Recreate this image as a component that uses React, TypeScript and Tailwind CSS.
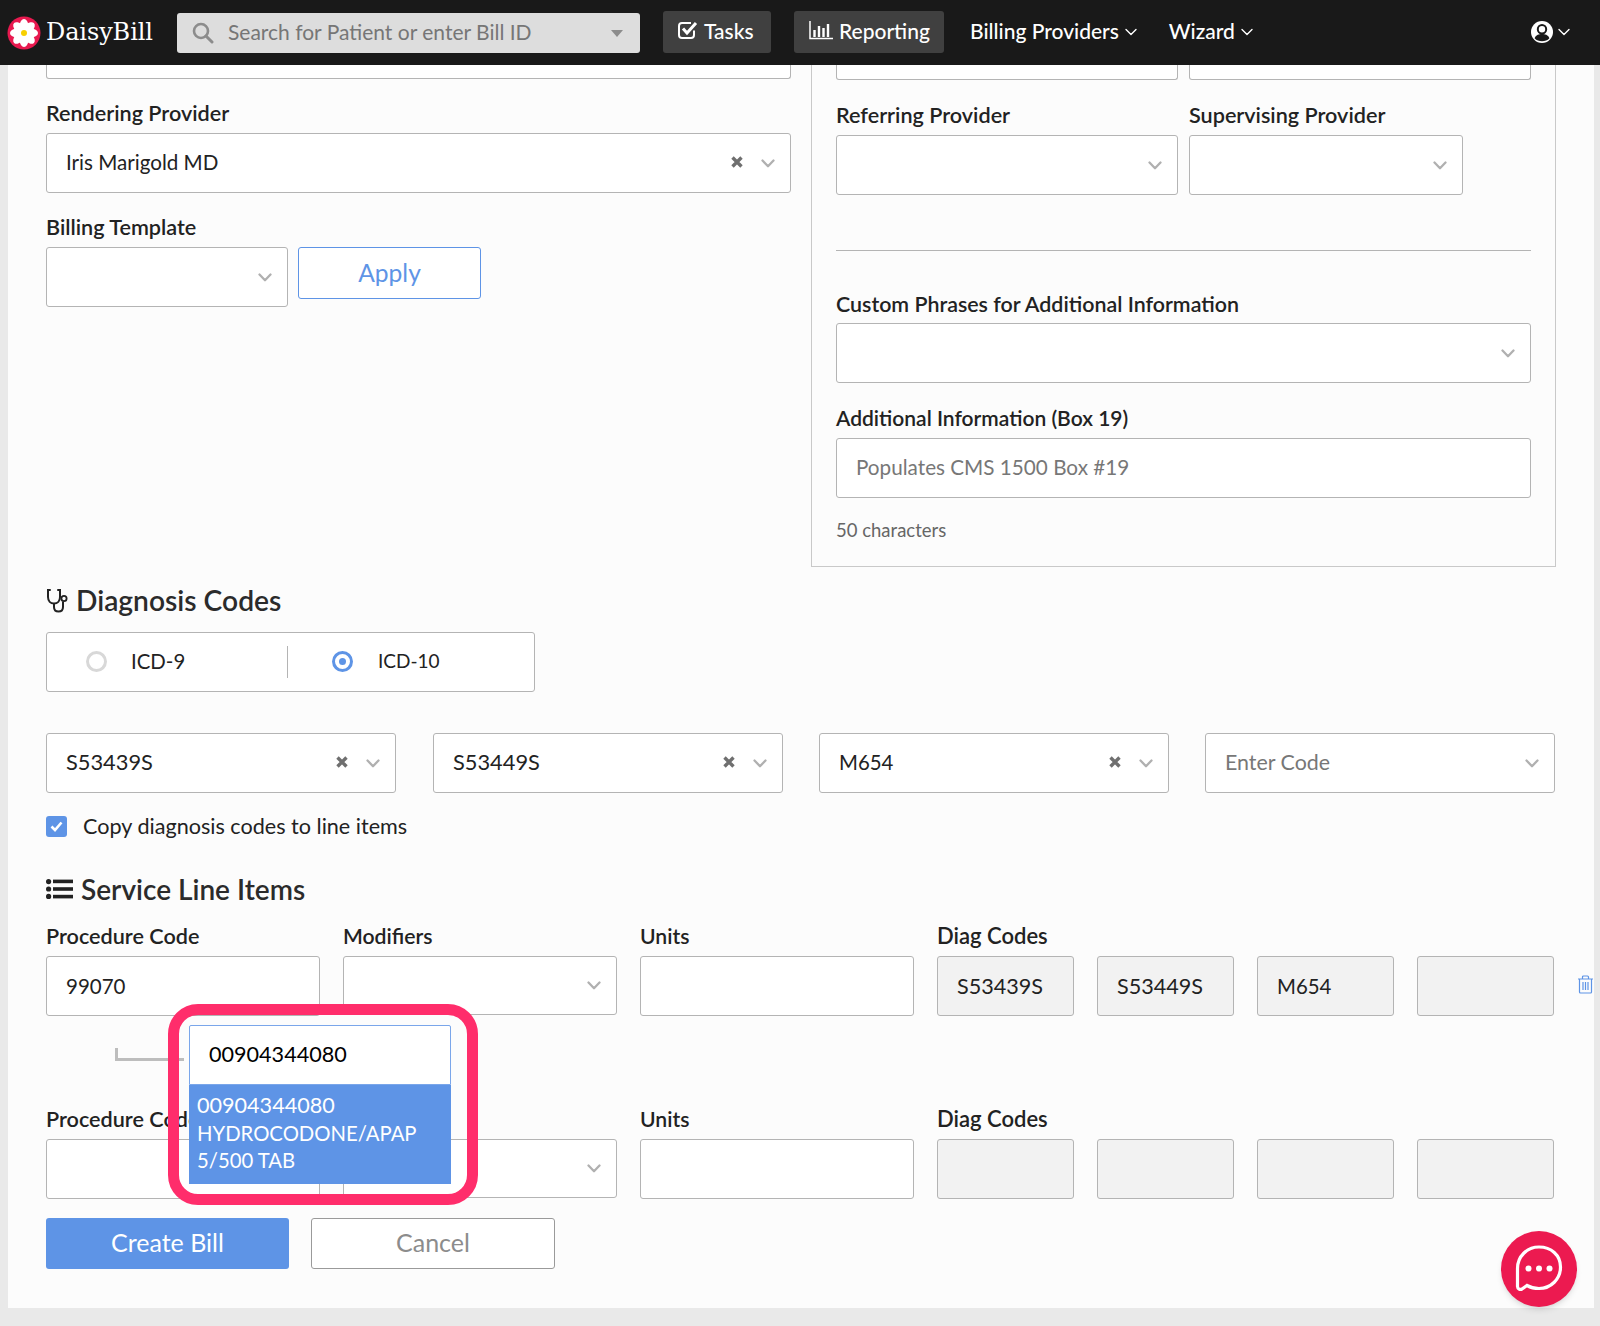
import React from "react";

const font = { fontFamily: '"Lato","Open Sans",sans-serif' };

function Chevron({ className = "" }: { className?: string }) {
  return (
    <svg width="14" height="9" viewBox="0 0 14 9" fill="none" className={className}>
      <path d="M1.5 1.5 7 7.2l5.500-5.700" stroke="#b0b0b0" strokeWidth="2.300" strokeLinecap="round" strokeLinejoin="round" />
    </svg>
  );
}

function NavChevron() {
  return (
    <svg width="12" height="8" viewBox="0 0 12 8" fill="none">
      <path d="M1 1.500 6 6.500l5-5" stroke="#fff" strokeWidth="1.400" strokeLinecap="round" strokeLinejoin="round" />
    </svg>
  );
}

function ClearX() {
  return (
    <svg width="12" height="12" viewBox="0 0 12 12" className="mr-[18px] -mt-[2px]">
      <path d="M1.500 1.500l9 9M10.500 1.500l-9 9" stroke="#6f6f6f" strokeWidth="3.400" />
    </svg>
  );
}

function Label({ children, className = "", size = "text-[21.6px]" }: { children: React.ReactNode; className?: string; size?: string }) {
  return <div className={`h-[24px] leading-[22px] font-semibold text-[#222] whitespace-nowrap ${size} ${className}`}>{children}</div>;
}

function Select({ value, placeholder, clear, className = "", text = "text-[20.6px]" }: { value?: string; placeholder?: string; clear?: boolean; className?: string; text?: string }) {
  return (
    <div className={`h-[60px] bg-white border border-[#b4b4b4] rounded-[3px] flex items-center pl-[19px] pr-[15px] ${className}`}>
      <span className={`flex-1 pb-[1px] ${text} ${placeholder ? "text-[#777]" : "text-[#222]"}`}>{value ?? placeholder}</span>
      {clear && <ClearX />}
      <Chevron />
    </div>
  );
}

function Field({ value, className = "" }: { value?: string; className?: string }) {
  return (
    <div className={`h-[60px] bg-white border border-[#b4b4b4] rounded-[3px] flex items-center pl-[19px] text-[20.5px] text-[#222] ${className}`}>{value}</div>
  );
}

function Diag({ value }: { value?: string }) {
  return (
    <div className={`w-[137px] h-[60px] bg-[#f2f2f2] border border-[#b4b4b4] rounded-[3px] flex items-center pl-[19px] text-[#222] ${value === "M654" ? "text-[20.4px]" : "text-[21.6px]"}`}>{value}</div>
  );
}

function Flower() {
  const petals = [0, 45, 90, 135, 180, 225, 270, 315];
  return (
    <svg width="34" height="34" viewBox="0 0 34 34">
      <circle cx="17" cy="17" r="16.500" fill="#e8194f" />
      {petals.map((a) => (
        <ellipse key={a} cx="17" cy="9.500" rx="4.300" ry="6.500" fill="#fff" transform={`rotate(${a} 17 17)`} />
      ))}
      <circle cx="17" cy="17" r="3" fill="#f7d000" />
    </svg>
  );
}

function ServiceRow({ diag, first }: { diag: (string | undefined)[]; first: boolean }) {
  return (
    <div className="flex gap-[23px]">
      <div className="w-[274px]">
        <Label className="mb-[7px]">Procedure Code</Label>
        <Field value={first ? "99070" : undefined} />
      </div>
      <div className="w-[274px]">
        <Label className="mb-[7px]" size="text-[21.2px]">Modifiers</Label>
        <div className="h-[59px] bg-white border border-[#b4b4b4] rounded-[3px] flex items-center justify-end pr-[15px]">
          <Chevron />
        </div>
      </div>
      <div className="w-[274px]">
        <Label className="mb-[7px]" size="text-[21.2px]">Units</Label>
        <Field />
      </div>
      <div className="w-[617px]">
        <Label className="mb-[7px]" size="text-[22px]">Diag Codes</Label>
        <div className="flex gap-[23px]">
          {diag.map((d, i) => (
            <Diag key={i} value={d} />
          ))}
        </div>
      </div>
    </div>
  );
}

export default function App() {
  return (
    <div className="relative w-[1600px] h-[1326px] bg-[#e9e9e9] overflow-hidden" style={font}>
      <nav className="h-[65px] bg-[#191919] flex items-center text-white text-[21px] font-medium">
        <div className="ml-[7px]"><Flower /></div>
        <span className="ml-[5px] w-[131px] text-[24px] font-normal tracking-[-0.1px] pb-[2px]" style={{ fontFamily: '"DejaVu Serif",serif' }}>DaisyBill</span>
        <div className="w-[463px] h-[40px] bg-[#dddddd] rounded-[3px] flex items-center pl-[15px] pr-[17px]">
          <svg width="22" height="22" viewBox="0 0 22 22" fill="none">
            <circle cx="9" cy="9" r="7" stroke="#8c8c8c" strokeWidth="2.600" />
            <path d="M14 14l6 6" stroke="#8c8c8c" strokeWidth="3" strokeLinecap="round" />
          </svg>
          <span className="ml-[14px] flex-1 text-[#767676] font-normal pb-[2px]">Search for Patient or enter Bill ID</span>
          <svg width="12" height="7" viewBox="0 0 12 7" className="mt-[2px]"><path d="M0 0h12L6 7z" fill="#8c8c8c" /></svg>
        </div>
        <div className="ml-[23px] w-[108px] h-[42px] bg-[#404040] rounded-[3px] flex items-center pl-[15px] -mt-[2px]">
          <svg width="20" height="20" viewBox="0 0 20 20" fill="none" className="-mt-[3px]">
            <path d="M16 10.500V15a3 3 0 0 1-3 3H4a3 3 0 0 1-3-3V6a3 3 0 0 1 3-3h9" stroke="#fff" strokeWidth="2" />
            <path d="M5 8.500l4 4.500 9-10" stroke="#fff" strokeWidth="3" />
          </svg>
          <span className="ml-[6px] pb-[2px]">Tasks</span>
        </div>
        <div className="ml-[23px] w-[150px] h-[42px] bg-[#404040] rounded-[3px] flex items-center pl-[15px] -mt-[2px]">
          <svg width="24" height="20" viewBox="0 0 24 20" fill="none" className="-mt-[3px]">
            <path d="M1 1v17.500h23" stroke="#fff" strokeWidth="1.500" />
            <path d="M5.500 10v7M10 6v11M14.500 8v9M19 4v13" stroke="#fff" strokeWidth="2.400" />
          </svg>
          <span className="ml-[6px] pb-[2px]">Reporting</span>
        </div>
        <div className="ml-[26px] flex items-center gap-[6px] -mt-[2px]">
          <span className="pb-[2px]">Billing Providers</span>
          <NavChevron />
        </div>
        <div className="ml-[32px] flex items-center gap-[6px] -mt-[2px]">
          <span className="pb-[2px]">Wizard</span>
          <NavChevron />
        </div>
        <div className="ml-auto mr-[30px] flex items-center gap-[5px] -mt-[2px]">
          <svg width="22" height="22" viewBox="0 0 22 22">
            <circle cx="11" cy="11" r="11" fill="#fff" />
            <circle cx="11" cy="8.200" r="4.200" fill="none" stroke="#191919" strokeWidth="2" />
            <path d="M3.600 17.200C5 13.800 8 13 11 13s6 .8 7.400 4.200C16.400 19.400 14 20.200 11 20.200s-5.400-.8-7.400-3z" fill="#191919" />
          </svg>
          <NavChevron />
        </div>
      </nav>

      <main className="relative ml-[8px] w-[1586px] h-[1243px] bg-[#fcfcfc] pl-[38px]">
        <div className="flex">
          <div className="w-[745px]">
            <div className="h-[14px] bg-white border border-t-0 border-[#b4b4b4] rounded-b-[3px]" />
            <Label className="mt-[23px] mb-[7px]">Rendering Provider</Label>
            <Select value="Iris Marigold MD" clear />
            <Label className="mt-[23px] mb-[7px]">Billing Template</Label>
            <div className="flex items-start gap-[10px]">
              <Select className="w-[242px] justify-end" />
              <button className="w-[183px] h-[52px] bg-white border border-[#5e94e6] rounded-[3px] text-[24.6px] text-[#5e94e6]">Apply</button>
            </div>
          </div>
          <div className="ml-[20px] w-[745px] h-[502px] border-x border-b border-[#c9c9c9] px-[24px]">
            <div className="flex gap-[11px]">
              <div className="w-[342px] h-[15px] bg-white border border-t-0 border-[#b4b4b4] rounded-b-[3px]" />
              <div className="w-[342px] h-[15px] bg-white border border-t-0 border-[#b4b4b4] rounded-b-[3px]" />
            </div>
            <div className="flex gap-[11px] mt-[23px]">
              <div className="w-[342px]">
                <Label className="pt-[1px] mb-[8px]">Referring Provider</Label>
                <Select className="justify-end" />
              </div>
              <div className="w-[274px]">
                <Label className="pt-[1px] mb-[8px]">Supervising Provider</Label>
                <Select className="justify-end" />
              </div>
            </div>
            <div className="mt-[55px] h-px bg-[#b4b4b4]" />
            <Label className="mt-[41px] mb-[7px] pt-[1px]" size="text-[21.4px]">Custom Phrases for Additional Information</Label>
            <Select />
            <Label className="mt-[23px] mb-[8px] pt-[1px]" size="text-[21px]">Additional Information (Box 19)</Label>
            <div className="h-[60px] bg-white border border-[#b4b4b4] rounded-[3px] flex items-center pl-[19px] text-[20.7px] text-[#777]">Populates CMS 1500 Box #19</div>
            <div className="mt-[22px] h-[20px] leading-[20px] text-[18.5px] text-[#666]">50 characters</div>
          </div>
        </div>

        <div className="mt-[19px] h-[32px] flex items-center">
          <svg width="24" height="26" viewBox="0 0 24 26" fill="none" className="-mt-[2px]">
            <path d="M4 2H2v7c0 4 2.600 6.500 6 6.500S14 13 14 9V2h-2" stroke="#222" strokeWidth="2" strokeLinecap="round" />
            <path d="M8 15.500v3.500c0 2.600 1.800 4.500 4.500 4.500S17 21.600 17 19v-5.500" stroke="#222" strokeWidth="2" />
            <circle cx="18" cy="10.500" r="2.600" stroke="#222" strokeWidth="1.800" />
          </svg>
          <h2 className="ml-[6px] text-[28.2px] font-semibold text-[#2b2b2b] pb-[3px]">Diagnosis Codes</h2>
        </div>
        <div className="mt-[14px] w-[489px] h-[60px] bg-white border border-[#b4b4b4] rounded-[3px] flex items-center text-[#222]">
          <div className="ml-[39px] mb-[1px] w-[21px] h-[21px] rounded-full border-[3px] border-[#d8d8d8] bg-white" />
          <span className="ml-[24px] w-[156px] text-[20.4px] pb-[1px]">ICD-9</span>
          <div className="w-px h-[32px] bg-[#b4b4b4]" />
          <div className="ml-[44px] mb-[1px] w-[21px] h-[21px] rounded-full border-[3px] border-[#5e94e6] bg-white flex items-center justify-center">
            <div className="w-[7px] h-[7px] rounded-full bg-[#5e94e6]" />
          </div>
          <span className="ml-[25px] text-[19px] pb-[1px]">ICD-10</span>
        </div>
        <div className="mt-[41px] flex">
          <Select value="S53439S" clear className="w-[350px]" text="text-[21.8px]" />
          <Select value="S53449S" clear className="w-[350px] ml-[37px]" text="text-[21.8px]" />
          <Select value="M654" clear className="w-[350px] ml-[36px]" text="text-[20.4px]" />
          <Select placeholder="Enter Code" className="w-[350px] ml-[36px]" text="text-[21.4px]" />
        </div>
        <div className="mt-[23px] flex items-center h-[21px] text-[21.6px] text-[#222]">
          <div className="w-[21px] h-[21px] bg-[#5e94e6] rounded-[3px] flex items-center justify-center">
            <svg width="13" height="11" viewBox="0 0 13 11" fill="none"><path d="M1.500 5.500 5 9l6.500-7.500" stroke="#fff" strokeWidth="2.600" /></svg>
          </div>
          <span className="ml-[16px]">Copy diagnosis codes to line items</span>
        </div>
        <div className="mt-[36px] h-[32px] flex items-center">
          <svg width="27" height="20" viewBox="0 0 27 20">
            <circle cx="2.600" cy="2.600" r="2.600" fill="#222" /><circle cx="2.600" cy="10" r="2.600" fill="#222" /><circle cx="2.600" cy="17.400" r="2.600" fill="#222" />
            <rect x="7" y="0.600" width="20" height="3.600" fill="#222" /><rect x="7" y="8.200" width="20" height="3.600" fill="#222" /><rect x="7" y="15.800" width="20" height="3.600" fill="#222" />
          </svg>
          <h2 className="ml-[8px] text-[28px] font-semibold text-[#2b2b2b]">Service Line Items</h2>
        </div>
        <div className="mt-[20px] relative">
          <ServiceRow first diag={["S53439S", "S53449S", "M654", undefined]} />
          <svg width="17" height="19" viewBox="0 0 17 19" fill="none" className="absolute left-[1531px] top-[50px]">
            <path d="M1 4h15M5.500 4V2a1 1 0 0 1 1-1h4a1 1 0 0 1 1 1v2M2.500 4v13a1 1 0 0 0 1 1h10a1 1 0 0 0 1-1V4M6 7v8M8.500 7v8M11 7v8" stroke="#5e94e6" strokeWidth="1.200" />
          </svg>
        </div>
        <div className="mt-[92px]">
          <ServiceRow first={false} diag={[undefined, undefined, undefined, undefined]} />
        </div>
        <div className="mt-[19px] flex gap-[22px] text-[25px]">
          <button className="w-[243px] h-[51px] bg-[#5e94e6] rounded-[3px] text-white pb-[2px]">Create Bill</button>
          <button className="w-[244px] h-[51px] bg-white border border-[#9a9a9a] rounded-[3px] text-[#8c8c8c] pb-[2px]">Cancel</button>
        </div>

        <div className="absolute left-[107px] top-[983px] w-[69px] h-[13px] border-l-[3px] border-b-[3px] border-[#bdbdbd]" />
        <div className="absolute left-[181px] top-[960px] w-[262px]">
          <div className="h-[60px] bg-white border border-[#7aa6ea] flex items-center pl-[19px] pb-[2px] text-[21.6px] text-black rounded-t-[2px]">00904344080</div>
          <div className="h-[99px] bg-[#5e94e6] pl-[8px] pt-[7px] text-[20.3px] leading-[27.5px] text-white">
            <span className="text-[21.6px]">00904344080</span>
            <br />
            HYDROCODONE/APAP
            <br />
            5/500 TAB
          </div>
        </div>
        <div className="absolute left-[160px] top-[939px] w-[310px] h-[201px] border-[11px] border-[#ff2d6b] rounded-[30px]" />
      </main>

      <div className="absolute left-[1501px] top-[1231px] w-[76px] h-[76px] rounded-full bg-[#ec1a50] shadow-md flex items-center justify-center">
        <svg width="50" height="50" viewBox="0 0 50 50" fill="none">
          <path d="M25 3C13 3 3.500 12.500 3.500 24.500v18a3 3 0 0 0 4.500 2.500l5-3.500c3.500 2 7.500 3 12 3 12 0 21.500-9.500 21.500-21.500S37 3 25 3z" stroke="#fff" strokeWidth="3.200" />
          <circle cx="14.500" cy="24.500" r="3" fill="#fff" />
          <circle cx="25" cy="24.500" r="3" fill="#fff" />
          <circle cx="35.500" cy="24.500" r="3" fill="#fff" />
        </svg>
      </div>
    </div>
  );
}
